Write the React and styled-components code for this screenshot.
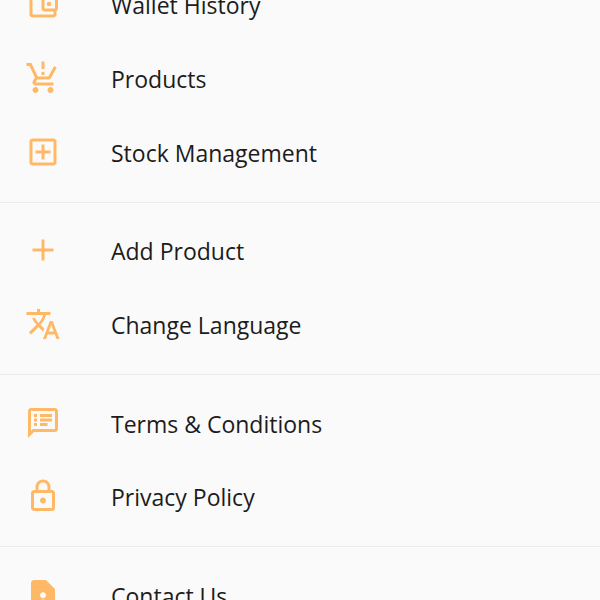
import React from 'react'
import styled, { createGlobalStyle } from 'styled-components'

const GlobalStyle = createGlobalStyle`
  html, body {
    margin: 0;
    height: 100%;
    overflow: hidden;
    background: #fafafa;
  }
`

const Drawer = styled.nav`
  width: 600px;
  height: 600px;
  overflow: hidden;
  background: #fafafa;
  font-family: 'Open Sans', sans-serif;
`

// the list is scrolled, the first row is cut off by the top of the screen
const ScrollArea = styled.div`
  margin-top: -31.5px;
`

const Section = styled.section`
  padding: 12px 0;
  border-bottom: 1px solid #ebebeb;

  &:first-child {
    padding-top: 0;
  }

  &:last-child {
    border-bottom: none;
  }
`

const Row = styled.div`
  height: 73.7px;
  display: flex;
  align-items: center;
  padding-left: 25px;
`

const IconBox = styled.svg`
  width: 36px;
  height: 36px;
  flex-shrink: 0;
  margin-right: 50px;
  margin-top: -2px;
  fill: #ffb966;
`

const Label = styled.span`
  font-size: 23px;
  color: #1c1c1c;
  white-space: nowrap;
`

const icons = {
  wallet:
    'M21 7.28V5c0-1.1-.9-2-2-2H5c-1.11 0-2 .9-2 2v14c0 1.1.89 2 2 2h14c1.1 0 2-.9 2-2v-2.28c.59-.35 1-.98 1-1.72V9c0-.74-.41-1.37-1-1.72zM20 9v6h-7V9h7zM5 19V5h14v2h-6c-1.1 0-2 .9-2 2v6c0 1.1.9 2 2 2h6v2H5zM16 13.5a1.5 1.5 0 1 0 0-3 1.5 1.5 0 0 0 0 3z',
  cart:
    'M13 10h-2V8h2v2zm0-4h-2V1h2v5zM7 18c-1.1 0-1.99.9-1.99 2S5.9 22 7 22s2-.9 2-2-.9-2-2-2zm10 0c-1.1 0-1.99.9-1.99 2s.89 2 1.99 2 2-.9 2-2-.9-2-2-2zm-9.83-3.25l.03-.12.9-1.63h7.45c.75 0 1.41-.41 1.75-1.03l3.86-7.01L19.42 4l-3.87 7H8.53L4.27 2H1v2h2l3.6 7.59-1.35 2.44C4.52 15.37 5.48 17 7 17h12v-2H7.42c-.13 0-.25-.11-.25-.25z',
  addBox:
    'M19 3H5c-1.11 0-2 .9-2 2v14c0 1.1.89 2 2 2h14c1.1 0 2-.9 2-2V5c0-1.1-.9-2-2-2zm0 16H5V5h14v14zm-8-2h2v-4h4v-2h-4V7h-2v4H7v2h4z',
  add: 'M19 13h-6v6h-2v-6H5v-2h6V5h2v6h6v2z',
  translate:
    'M12.87 15.07l-2.54-2.51.03-.03c1.74-1.94 2.98-4.17 3.71-6.53H17V4h-7V2H8v2H1v1.99h11.17C11.5 7.92 10.44 9.75 9 11.35 8.07 10.32 7.3 9.19 6.69 8h-2c.73 1.63 1.73 3.17 2.98 4.56l-5.09 5.02L4 19l5-5 3.11 3.11.76-2.04zM18.5 10h-2L12 22h2l1.12-3h4.75L21 22h2l-4.5-12zm-2.62 7l1.62-4.33L19.12 17h-3.24z',
  notes:
    'M20 2H4c-1.1 0-1.99.9-1.99 2L2 22l4-4h14c1.1 0 2-.9 2-2V4c0-1.1-.9-2-2-2zm0 14H5.17l-.59.59-.58.58V4h16v12zM6 12h2v2H6zm0-3h2v2H6zm0-3h2v2H6zm4 6h5v2h-5zm0-3h8v2h-8zm0-3h8v2h-8z',
  lock:
    'M18 8h-1V6c0-2.76-2.24-5-5-5S7 3.24 7 6v2H6c-1.1 0-2 .9-2 2v10c0 1.1.9 2 2 2h12c1.1 0 2-.9 2-2V10c0-1.1-.9-2-2-2zM9 6c0-1.66 1.34-3 3-3s3 1.34 3 3v2H9V6zm9 14H6V10h12v10zm-6-3c1.1 0 2-.9 2-2s-.9-2-2-2-2 .9-2 2 .9 2 2 2z',
  contact:
    'M14 2H6c-1.1 0-2 .9-2 2v16c0 1.1.9 2 2 2h12c1.1 0 2-.9 2-2V8l-6-6zm-2 8.2c1.1 0 2 .9 2 2s-.9 2-2 2-2-.9-2-2 .9-2 2-2zm4 8H8v-.57c0-.81.48-1.53 1.22-1.85.85-.37 1.79-.58 2.78-.58.99 0 1.93.21 2.78.58.74.32 1.22 1.04 1.22 1.85v.57z',
}

const sections = [
  [
    { icon: 'wallet', label: 'Wallet History' },
    { icon: 'cart', label: 'Products' },
    { icon: 'addBox', label: 'Stock Management' },
  ],
  [
    { icon: 'add', label: 'Add Product' },
    { icon: 'translate', label: 'Change Language' },
  ],
  [
    { icon: 'notes', label: 'Terms & Conditions' },
    { icon: 'lock', label: 'Privacy Policy' },
  ],
  [{ icon: 'contact', label: 'Contact Us' }],
]

const MenuRow = ({ icon, label }) => (
  <Row>
    <IconBox viewBox="0 0 24 24">
      <path d={icons[icon]} />
    </IconBox>
    <Label>{label}</Label>
  </Row>
)

const App = () => (
  <Drawer>
    <GlobalStyle />
    <ScrollArea>
      {sections.map((rows, index) => (
        <Section key={index}>
          {rows.map((row) => (
            <MenuRow key={row.label} {...row} />
          ))}
        </Section>
      ))}
    </ScrollArea>
  </Drawer>
)

export default App
